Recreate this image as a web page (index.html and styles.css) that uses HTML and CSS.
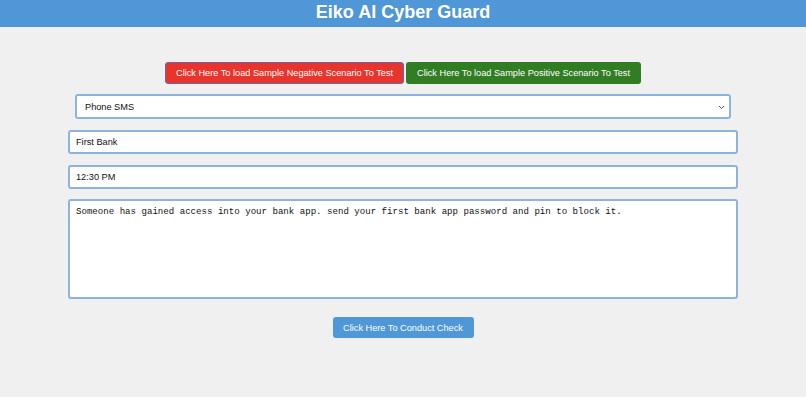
FILE: index.html
```html
<!DOCTYPE html>
<html lang="en">
<head>
    <meta charset="UTF-8">
    <meta name="viewport" content="width=device-width, initial-scale=1.0">
    <title>Eiko AI Cyber Guard</title>
    <link rel="stylesheet" href="styles.css">
</head>
<body>
    <div class="header">
        <h1>Eiko AI Cyber Guard</h1>
    </div>

    <div class="container">
        <div class="sample-buttons">
            <button class="sample-btn negative">Click Here To load Sample Negative Scenario To Test</button>
            <button class="sample-btn positive">Click Here To load Sample Positive Scenario To Test</button>
        </div>

        <div class="select-wrap">
            <select class="channel-select" id="channel">
                <option>Phone SMS</option>
                <option>Email</option>
                <option>WhatsApp</option>
            </select>
            <svg class="chevron" width="7" height="5" viewBox="0 0 7 5">
                <path d="M1 1 L3.5 3.5 L6 1" fill="none" stroke="#555" stroke-width="1"/>
            </svg>
        </div>

        <input type="text" class="field" id="sender" value="First Bank">
        <input type="text" class="field" id="time" value="12:30 PM">

        <textarea class="field message" id="message">Someone has gained access into your bank app. send your first bank app password and pin to block it.</textarea>

        <div class="check-row">
            <button class="check-btn">Click Here To Conduct Check</button>
        </div>
    </div>
</body>
</html>
```

FILE: styles.css
```css
* {
    margin: 0;
    padding: 0;
    box-sizing: border-box;
}

body {
    font-family: "Liberation Sans", Arial, sans-serif;
    background: #f0f0f0;
    color: #111;
}

.header {
    background: #4f97d6;
    height: 27px;
    display: flex;
    align-items: center;
    justify-content: center;
}

.header h1 {
    color: white;
    font-size: 18px;
    font-weight: 700;
    line-height: 1;
    margin-top: -3px;
}

.container {
    width: 670px;
    margin: 0 auto;
    padding-top: 35px;
    display: flex;
    flex-direction: column;
}

.sample-buttons {
    display: flex;
    justify-content: center;
    gap: 2px;
}

.sample-btn {
    font-family: "Liberation Sans", Arial, sans-serif;
    font-size: 9.2px;
    color: white;
    height: 22px;
    padding: 0 10px;
    border-radius: 3px;
    border: 1px solid transparent;
    cursor: pointer;
}

.negative {
    background: #e8342a;
    border: 1.5px solid #6a67a8;
}

.positive {
    background: #317d23;
}

.select-wrap {
    position: relative;
    margin: 10px 7px 0;
    display: flex;
}

.channel-select {
    flex: 1;
    appearance: none;
    -webkit-appearance: none;
    height: 25px;
    padding: 0 8px;
    font-family: "Liberation Sans", Arial, sans-serif;
    font-size: 9.2px;
    background: white;
    border: 2px solid #8db4dc;
    border-radius: 3px;
    color: #111;
    outline: none;
}

.chevron {
    position: absolute;
    right: 6px;
    top: 11px;
    pointer-events: none;
}

.field {
    margin-top: 11px;
    height: 24px;
    padding: 0 6px;
    font-family: "Liberation Sans", Arial, sans-serif;
    font-size: 9.2px;
    background: white;
    border: 2px solid #8db4dc;
    border-radius: 3px;
    color: #111;
    outline: none;
}

.message {
    margin-top: 10px;
    height: 100px;
    padding: 6px 6px;
    font-family: "Liberation Mono", "DejaVu Sans Mono", monospace;
    font-size: 9.1px;
    line-height: 1.2;
    resize: none;
}

.check-row {
    display: flex;
    justify-content: center;
    margin-top: 18px;
}

.check-btn {
    font-family: "Liberation Sans", Arial, sans-serif;
    font-size: 9.2px;
    color: white;
    background: #4f97d6;
    border: none;
    border-radius: 3px;
    height: 21px;
    width: 141px;
    cursor: pointer;
}
```
